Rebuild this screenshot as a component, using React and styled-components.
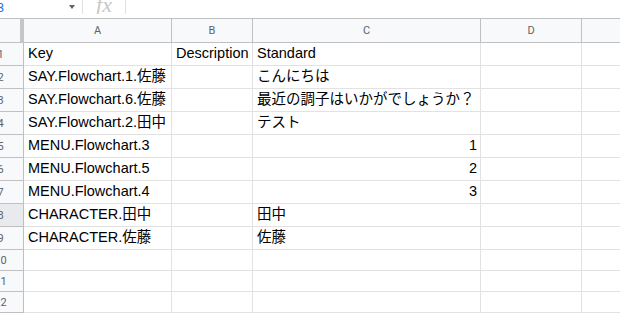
import React from 'react';
import styled, { createGlobalStyle } from 'styled-components';

const GlobalStyle = createGlobalStyle`
  html, body {
    margin: 0;
    padding: 0;
    background: #fff;
  }
  body {
    font-family: "Liberation Sans", Arial, "Noto Sans CJK JP", sans-serif;
  }
`;

const Frame = styled.div`
  width: 620px;
  height: 313px;
  overflow: hidden;
  background: #fff;
`;

const FormulaBar = styled.div`
  height: 18px;
  display: flex;
  align-items: flex-start;
  overflow: hidden;
`;

const NameBox = styled.div`
  width: 82px;
  height: 14px;
  display: flex;
  align-items: center;
  border-right: 1px solid #e0e0e0;
  overflow: hidden;
`;

const NameText = styled.span`
  margin-left: -12px;
  font-size: 13px;
  color: #1a73e8;
  flex: 1;
`;

const Caret = styled.span`
  width: 0;
  height: 0;
  margin-right: 7px;
  border-left: 3.5px solid transparent;
  border-right: 3.5px solid transparent;
  border-top: 4px solid #5f6368;
`;

const FxBox = styled.div`
  width: 43px;
  height: 14px;
  border-right: 1px solid #e0e0e0;
  display: flex;
  align-items: flex-end;
  justify-content: center;
  font-family: "Liberation Serif", serif;
  font-style: italic;
  font-size: 22px;
  color: #c8c8c8;
  line-height: 14px;
  padding-bottom: 2px;
  box-sizing: border-box;
  overflow: hidden;
`;

const Grid = styled.div`
  margin-left: -22px;
  display: grid;
  grid-template-columns: 46px 148px 81px 228px 101px 80px;
`;

const HeadCell = styled.div`
  box-sizing: border-box;
  height: 25px;
  background: #f8f9fa;
  border-top: 1px solid #c0c0c0;
  border-bottom: 1px solid #c0c0c0;
  border-right: ${p => (p.$corner ? '4px solid #c4c7c5' : '1px solid #c0c0c0')};
  display: flex;
  align-items: center;
  justify-content: center;
  font-family: Roboto, "Liberation Sans", Arial, sans-serif;
  font-size: 11px;
  color: #5f6368;
`;

const RowHead = styled.div`
  box-sizing: border-box;
  height: ${p => p.$h}px;
  background: ${p => (p.$active ? '#e8eaed' : '#f8f9fa')};
  border-bottom: 1px solid #c0c0c0;
  border-right: 1px solid #c0c0c0;
  display: flex;
  align-items: center;
  justify-content: center;
  font-family: Roboto, "Liberation Sans", Arial, sans-serif;
  font-size: 11px;
  color: #5f6368;
`;

const Cell = styled.div`
  box-sizing: border-box;
  height: ${p => p.$h}px;
  border-bottom: 1px solid #e2e2e2;
  border-right: 1px solid #e2e2e2;
  display: flex;
  align-items: flex-end;
  justify-content: ${p => (p.$num ? 'flex-end' : 'flex-start')};
  padding: 0 ${p => (p.$num ? '3px' : '4px')} 3px 4px;
  font-size: 14.5px;
  line-height: 17px;
  color: #000;
  white-space: nowrap;
  overflow: visible;
`;

const columns = ['A', 'B', 'C', 'D', ''];

const rows = [
  ['Key', 'Description', 'Standard'],
  ['SAY.Flowchart.1.佐藤', '', 'こんにちは'],
  ['SAY.Flowchart.6.佐藤', '', '最近の調子はいかがでしょうか？'],
  ['SAY.Flowchart.2.田中', '', 'テスト'],
  ['MENU.Flowchart.3', '', 1],
  ['MENU.Flowchart.5', '', 2],
  ['MENU.Flowchart.4', '', 3],
  ['CHARACTER.田中', '', '田中'],
  ['CHARACTER.佐藤', '', '佐藤'],
  ['', '', ''],
  ['', '', ''],
  ['', '', ''],
];

export default function App() {
  return (
    <Frame>
      <GlobalStyle />
      <FormulaBar>
        <NameBox>
          <NameText>B3</NameText>
          <Caret />
        </NameBox>
        <FxBox>fx</FxBox>
      </FormulaBar>
      <Grid>
        <HeadCell $corner />
        {columns.map((c, i) => (
          <HeadCell key={i}>{c}</HeadCell>
        ))}
        {rows.map((r, i) => {
          const h = i < 9 ? 23 : 21;
          return (
            <React.Fragment key={i}>
              <RowHead $h={h} $active={i === 7}>{i + 1}</RowHead>
              {[r[0], r[1], r[2], '', ''].map((v, j) => (
                <Cell key={j} $h={h} $num={typeof v === 'number'}>
                  {v}
                </Cell>
              ))}
            </React.Fragment>
          );
        })}
      </Grid>
    </Frame>
  );
}
